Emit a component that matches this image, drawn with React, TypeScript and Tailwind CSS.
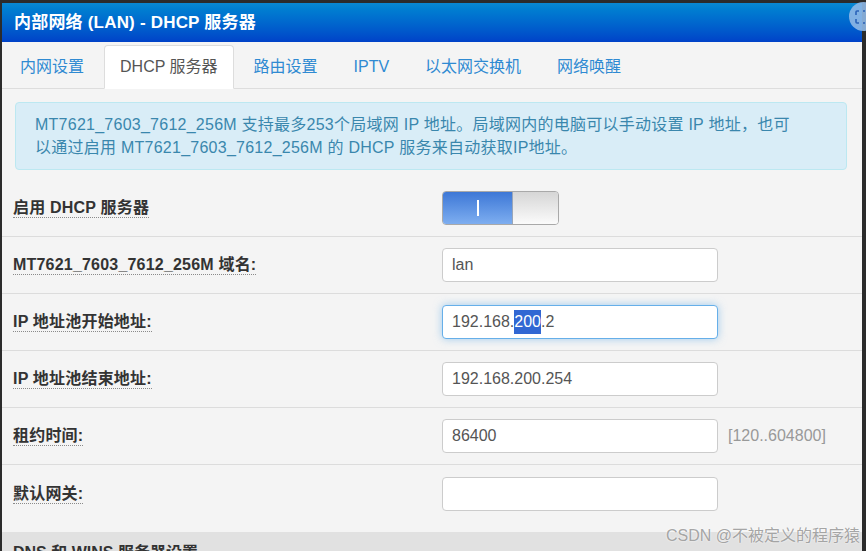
const font = { fontFamily: '"Liberation Sans", "Noto Sans CJK SC", sans-serif' };

const tabs = ["内网设置", "DHCP 服务器", "路由设置", "IPTV", "以太网交换机", "网络唤醒"];

const Label = ({ text }: { text: string }) => (
  <div className="w-[429px] shrink-0">
    <span className="border-b border-dotted border-[#8a8a8a] pb-[1px] text-[16px] font-bold leading-[20px] tracking-[0.2px] text-[#333]">
      {text}
    </span>
  </div>
);

const Field = ({
  children,
  focused,
}: {
  children?: React.ReactNode;
  focused?: boolean;
}) => (
  <div
    className={`flex h-[34px] w-[276px] items-center rounded-[4px] border bg-white px-[9px] text-[16px] text-[#555] ${
      focused
        ? "border-[#66afe9] shadow-[0_0_8px_rgba(102,175,233,0.6)]"
        : "border-[#cccccc]"
    }`}
  >
    {children}
  </div>
);

const Row = ({
  label,
  children,
  last,
}: {
  label: string;
  children: React.ReactNode;
  last?: boolean;
}) => (
  <div
    className={`flex h-[57px] items-center px-[11px] ${
      last ? "" : "border-b border-[#dcdcdc]"
    }`}
  >
    <Label text={label} />
    {children}
  </div>
);

export default function App() {
  return (
    <div
      style={font}
      className="relative h-[551px] w-[866px] overflow-hidden bg-[#2b2b2b] pl-[2px] pr-[4px] pt-[3px]"
    >
      <div className="flex h-full flex-col bg-[#f4f4f4]">
        {/* title bar */}
        <div className="flex h-[39px] shrink-0 items-center bg-gradient-to-b from-[#0a88d2] to-[#0042c8] pl-[12px] text-[17px] font-bold tracking-[0.2px] text-white">
          内部网络 (LAN) - DHCP 服务器
        </div>

        {/* tabs */}
        <div className="flex h-[47px] shrink-0 items-end gap-[4px] border-b border-[#dddddd] pl-[2px]">
          {tabs.map((t, i) => (
            <div
              key={t}
              className={`-mb-[1px] flex h-[44px] items-center rounded-t-[4px] border px-[15px] text-[16px] ${
                i === 1
                  ? "border-[#dddddd] border-b-transparent bg-white text-[#555]"
                  : "border-transparent text-[#2f8ad2]"
              }`}
            >
              {t}
            </div>
          ))}
        </div>

        {/* info alert */}
        <div className="ml-[13px] mr-[15px] mt-[13px] rounded-[4px] border border-[#bce8f1] bg-[#d9edf7] px-[19px] py-[10px] text-[16px] leading-[23px] tracking-[0.25px] text-[#3a87ad]">
          MT7621_7603_7612_256M 支持最多253个局域网 IP 地址。局域网内的电脑可以手动设置 IP 地址，也可
          <br />
          以通过启用 MT7621_7603_7612_256M 的 DHCP 服务来自动获取IP地址。
        </div>

        <div className="mt-[10px]">
          <Row label="启用 DHCP 服务器">
            <div className="flex h-[34px] w-[117px] overflow-hidden rounded-[4px] border border-[#a9a9a9]">
              <div className="flex w-[69px] items-center justify-center bg-gradient-to-b from-[#3d77d6] to-[#7eaef0]">
                <div className="h-[16px] w-[2px] bg-white" />
              </div>
              <div className="flex-1 border-l border-[#9aa6b8] bg-gradient-to-b from-[#d6d6d6] to-[#fbfbfb]" />
            </div>
          </Row>
          <Row label="MT7621_7603_7612_256M 域名:">
            <Field>lan</Field>
          </Row>
          <Row label="IP 地址池开始地址:">
            <Field focused>
              192.168.
              <span className="bg-[#3167d3] text-white">200</span>
              .2
            </Field>
          </Row>
          <Row label="IP 地址池结束地址:">
            <Field>192.168.200.254</Field>
          </Row>
          <Row label="租约时间:">
            <Field>86400</Field>
            <span className="ml-[10px] text-[16px] text-[#999]">[120..604800]</span>
          </Row>
          <Row label="默认网关:" last>
            <Field />
          </Row>
        </div>

        {/* next section heading */}
        <div className="mt-auto h-[19px] shrink-0 bg-[#e1e1e1] pl-[11px] pt-[11px] text-[16px] font-bold leading-[20px] text-[#333]">
          DNS 和 WINS 服务器设置
        </div>
      </div>

      {/* floating circle button top right */}
      <div className="absolute left-[849px] top-[2px] flex h-[29px] w-[29px] items-center justify-start rounded-full bg-[#8fb8e6]/90 pl-[6px]">
        <svg width="12" height="14" viewBox="0 0 12 14" fill="none" stroke="#2a62b8" strokeWidth="1.6">
          <path d="M4 1H2a1 1 0 0 0-1 1v3M4 13H2a1 1 0 0 1-1-1V9M8 1h2M8 13h2" />
        </svg>
      </div>

      {/* watermark */}
      <div className="absolute left-[666px] top-[525px] whitespace-nowrap text-[16px] leading-[22px] text-[#9a9a9a]/90 [text-shadow:0_0_2px_#fff]">
        CSDN @不被定义的程序猿
      </div>
    </div>
  );
}
